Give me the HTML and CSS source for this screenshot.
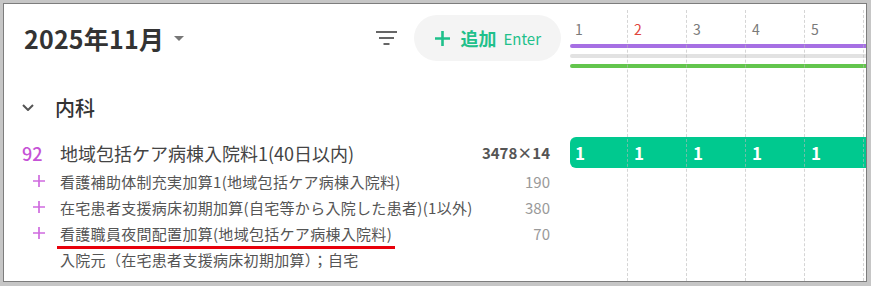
FILE: index.html
```html
<!DOCTYPE html>
<html lang="ja">
<head>
<meta charset="UTF-8">
<meta name="viewport" content="width=device-width, initial-scale=1.0">
<title>入院料カレンダー</title>
<link rel="stylesheet" href="styles.css">
</head>
<body>
<div class="frame">
<div class="board">

    <!-- toolbar -->
    <div class="toolbar">
        <span class="month">2025年11月</span>
        <svg class="caret" width="10" height="5" viewBox="0 0 10 5"><path d="M0 0 L10 0 L5 5 Z" fill="#777"/></svg>
        <span class="spacer"></span>
        <svg class="filter" width="21" height="14" viewBox="0 0 21 14">
            <rect x="0" y="0" width="21" height="2" fill="#666"/>
            <rect x="3" y="6" width="15" height="2" fill="#666"/>
            <rect x="7.5" y="12" width="6" height="2" fill="#666"/>
        </svg>
        <button class="add-btn">
            <svg width="15" height="15" viewBox="0 0 15 15"><path d="M7.5 0 V15 M0 7.5 H15" stroke="#1fc08b" stroke-width="2.6"/></svg>
            <span class="add-label">追加</span>
            <span class="add-key">Enter</span>
        </button>
    </div>

    <!-- day header -->
    <div class="days">
        <div class="day-nums">
            <span class="day">1</span>
            <span class="day sunday">2</span>
            <span class="day">3</span>
            <span class="day">4</span>
            <span class="day">5</span>
        </div>
        <div class="track purple"></div>
        <div class="track gray"></div>
        <div class="track green"></div>
    </div>

    <!-- ward -->
    <div class="section">
        <svg width="12" height="7" viewBox="0 0 12 7"><path d="M1 1 L6 6 L11 1" fill="none" stroke="#555" stroke-width="2"/></svg>
        <span class="section-name">内科</span>
    </div>

    <div class="row main">
        <span class="marker code">92</span>
        <span class="label">地域包括ケア病棟入院料1(40日以内)</span>
        <span class="amount">3478×14</span>
    </div>
    <div class="row sub">
        <span class="marker"><svg class="plus" width="12" height="12" viewBox="0 0 12 12"><path d="M6 0 V12 M0 6 H12" stroke="#cf6bdf" stroke-width="1.7"/></svg></span>
        <span class="label">看護補助体制充実加算1(地域包括ケア病棟入院料)</span>
        <span class="points">190</span>
    </div>
    <div class="row sub">
        <span class="marker"><svg class="plus" width="12" height="12" viewBox="0 0 12 12"><path d="M6 0 V12 M0 6 H12" stroke="#cf6bdf" stroke-width="1.7"/></svg></span>
        <span class="label">在宅患者支援病床初期加算(自宅等から入院した患者)(1以外)</span>
        <span class="points">380</span>
    </div>
    <div class="row sub">
        <span class="marker"><svg class="plus" width="12" height="12" viewBox="0 0 12 12"><path d="M6 0 V12 M0 6 H12" stroke="#cf6bdf" stroke-width="1.7"/></svg></span>
        <span class="label"><span class="mark">看護職員夜間配置加算(地域包括ケア病棟入院料)</span></span>
        <span class="points">70</span>
    </div>
    <div class="row sub">
        <span class="marker"></span>
        <span class="label">入院元（在宅患者支援病床初期加算）；自宅</span>
    </div>

    <!-- stay bar -->
    <div class="stay">
        <span>1</span><span>1</span><span>1</span><span>1</span><span>1</span>
    </div>

    <!-- column guides -->
    <div class="grid-lines">
        <span></span><span></span><span></span><span></span><span></span><span></span>
    </div>

</div>
</div>
</body>
</html>
```

FILE: styles.css
```css
body {
    margin: 0;
    padding: 0;
    background: #fff;
    font-family: "Noto Sans CJK JP", "Noto Sans", sans-serif;
    color: #444;
}
.frame {
    width: 871px;
    height: 286px;
    box-sizing: border-box;
    border: solid #c6c6c6;
    border-width: 3px 4px 4px 3px;
}
.board {
    height: 100%;
    box-sizing: border-box;
    border: 1px solid #7d7d7d;
    background: #fff;
    display: grid;
    grid-template-columns: 565px 1fr;
    grid-template-rows: 68px 65px 31px 26px 26px 26px 26px 1fr;
    overflow: hidden;
}
/* left column */
.toolbar, .section, .row {
    grid-column: 1;
}
.toolbar {
    display: flex;
    align-items: center;
    padding: 0 8px 0 20px;
}
.month {
    font-size: 25px;
    font-weight: 700;
    color: #333;
    letter-spacing: 0.2px;
}
.caret {
    margin-left: 10px;
}
.spacer {
    flex: 1;
}
.add-btn {
    display: flex;
    align-items: center;
    height: 46px;
    margin-left: 17px;
    padding: 0 20px 0 21px;
    border: none;
    border-radius: 23px;
    background: #f4f4f4;
    font-family: inherit;
    color: #1fc08b;
}
.add-label {
    margin-left: 10px;
    font-size: 18px;
    font-weight: 700;
}
.add-key {
    margin-left: 7px;
    font-size: 15px;
}
.section {
    display: flex;
    align-items: center;
    padding: 5px 0 0 18px;
}
.section-name {
    margin-left: 21px;
    font-size: 20px;
    font-weight: 500;
    color: #333;
}
.row {
    display: flex;
    align-items: center;
    padding: 0 19px 0 18px;
    white-space: nowrap;
}
.marker {
    flex: none;
    width: 38px;
    display: flex;
    align-items: center;
}
.code {
    font-size: 18px;
    font-weight: 500;
    color: #c552d6;
}
.plus {
    margin-left: 11px;
}
.label {
    flex: 1;
}
.main .label {
    font-size: 18px;
    color: #444;
}
.sub .label {
    font-size: 15px;
    letter-spacing: 0.3px;
    color: #555;
}
.amount {
    font-size: 15px;
    font-weight: 700;
    color: #555;
}
.points {
    font-size: 15px;
    color: #9a9a9a;
}
.mark {
    position: relative;
}
.mark::after {
    content: "";
    position: absolute;
    left: -3px;
    right: -3px;
    bottom: -5px;
    height: 3px;
    background: #e8000b;
}
/* timeline column */
.days {
    grid-column: 2;
    grid-row: 1;
    padding-top: 16px;
    overflow: hidden;
}
.day-nums {
    display: flex;
}
.day {
    flex: none;
    width: 59px;
    box-sizing: border-box;
    padding-left: 6px;
    font-size: 14px;
    line-height: 18px;
    color: #7a7a7a;
}
.sunday {
    color: #e0453c;
}
.track {
    height: 4px;
    margin: 6px 0 0 1px;
    border-radius: 2px 0 0 2px;
}
.purple {
    background: #a66fe3;
}
.gray {
    background: #e2e2e2;
}
.green {
    background: #63c54d;
}
.stay {
    grid-column: 2;
    grid-row: 3;
    display: flex;
    align-items: center;
    margin-left: 1px;
    border-radius: 6px 0 0 6px;
    background: #00c98f;
    overflow: hidden;
}
.stay span {
    flex: none;
    width: 59px;
    box-sizing: border-box;
    padding-left: 5px;
    font-size: 17px;
    font-weight: 700;
    color: #fff;
}
.grid-lines {
    grid-column: 2;
    grid-row: 1 / -1;
    z-index: 1;
    display: flex;
    margin-top: 6px;
    overflow: hidden;
    pointer-events: none;
}
.grid-lines span {
    flex: none;
    width: 59px;
    box-sizing: border-box;
    border-right: 1px dashed rgba(185, 185, 185, 0.6);
}
```
